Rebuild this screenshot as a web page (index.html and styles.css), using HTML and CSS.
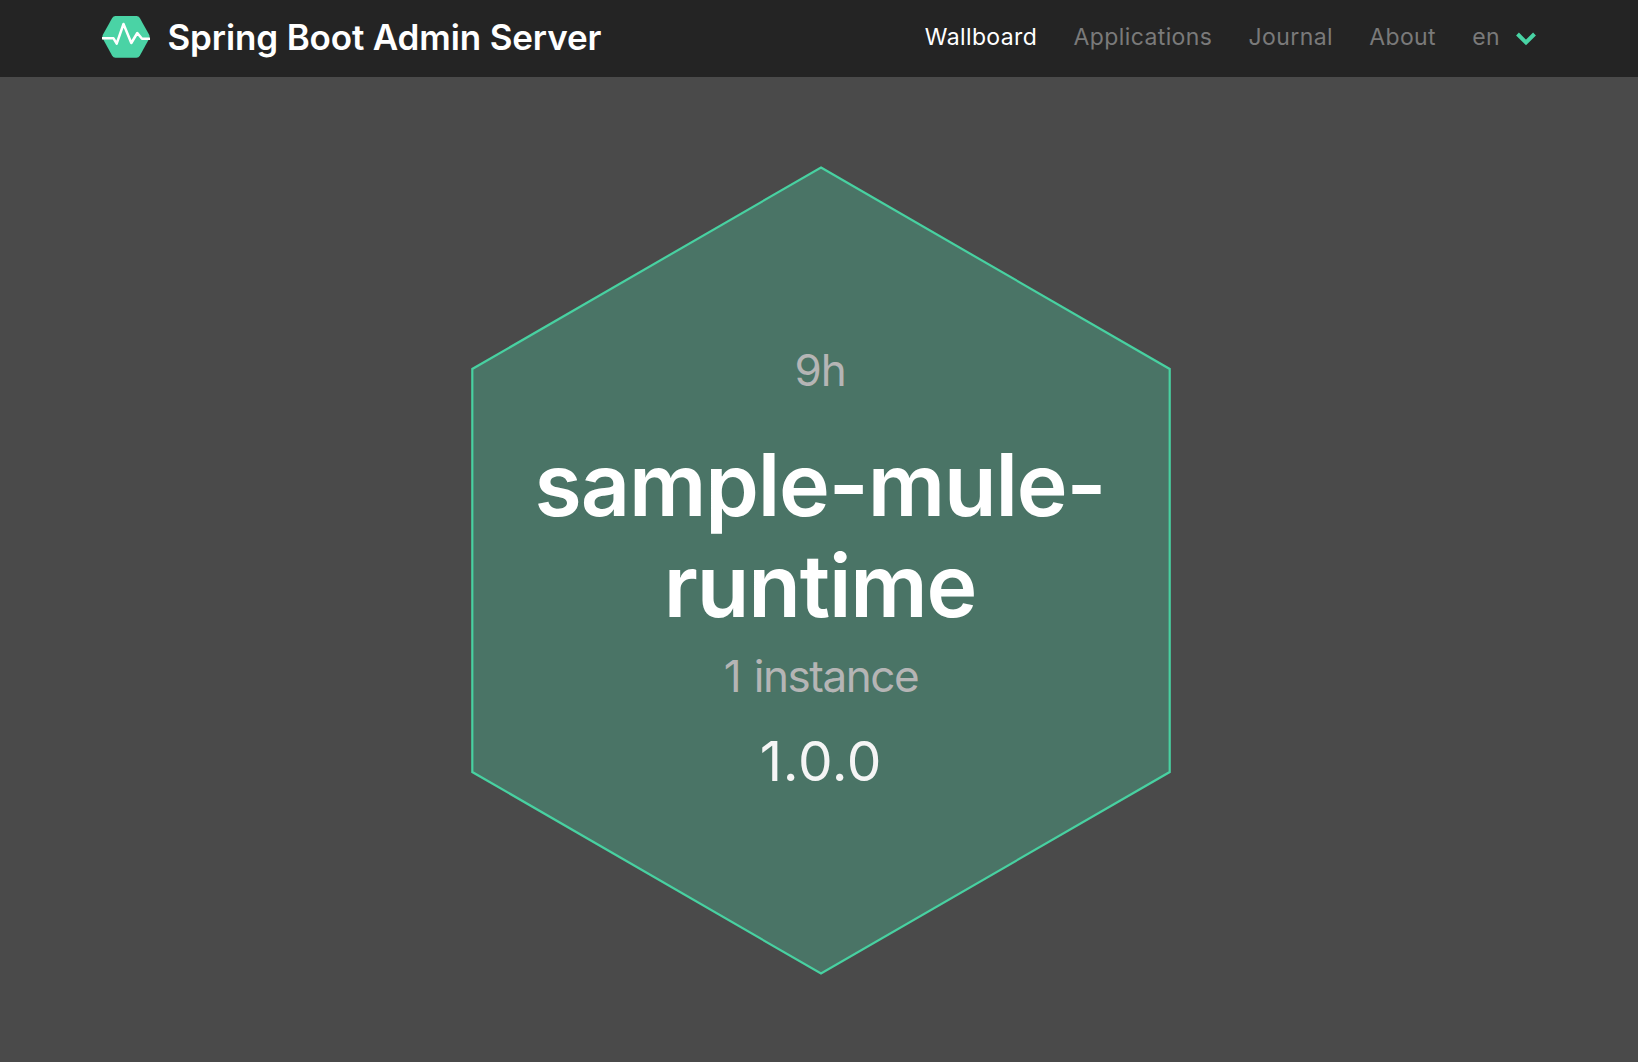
FILE: index.html
```
<!DOCTYPE html>
<html lang="en">
<head>
<meta charset="utf-8">
<title>Spring Boot Admin Server</title>
<link rel="stylesheet" href="styles.css">
</head>
<body>
<header class="navbar">
  <a class="brand">
    <svg class="brand-logo" width="48" height="42" viewBox="0 0 48 42">
      <path class="logo-shape" d="M13.5 0h21q2.2 0 3.3 1.9L47 18.6q1.2 2.2 0 4.4l-9.2 16.8q-1.1 2-3.3 2h-21q-2.2 0-3.3-2L1 23q-1.2-2.2 0-4.4L10.200 1.900q1.100-1.900 3.300-1.900z"/>
      <path class="logo-pulse" d="M.5 22.300H11.500L14.700 27.600 21.500 8 29.300 27 35.300 17 40 22.700H47.500"/>
    </svg>
    <span class="brand-title">Spring Boot Admin Server</span>
  </a>
  <nav class="menu">
    <a class="item active">Wallboard</a>
    <a class="item">Applications</a>
    <a class="item">Journal</a>
    <a class="item">About</a>
    <a class="item language">en
      <svg class="chevron" width="20" height="14" viewBox="0 0 20 14"><path d="M1.500 2 10 10.500 18.500 2"/></svg>
    </a>
  </nav>
</header>
<main class="wallboard">
  <article class="application">
    <svg class="hexagon" width="700" height="810" viewBox="0 0 700 810">
      <polygon points="350,2.500 698.700,204 698.700,607 350,808.500 1.300,607 1.300,204"/>
    </svg>
    <div class="details">
      <div class="uptime">9h</div>
      <h1 class="name">sample-mule-<br>runtime</h1>
      <div class="instances">1 instance</div>
      <div class="version">1.0.0</div>
    </div>
  </article>
</main>
</body>
</html>
```
FILE: styles.css
```
* { box-sizing: border-box; }

body {
  margin: 0;
  min-height: 1062px;
  background: #4a4a4a;
  font-family: Inter, "Liberation Sans", sans-serif;
  overflow: hidden;
}

.navbar {
  display: flex;
  justify-content: space-between;
  height: 77px;
  padding: 0 102px 0 101.5px;
  background: #242424;
}

.brand {
  display: flex;
  align-items: flex-start;
  padding-top: 16px;
}

.brand-logo { flex: none; }
.logo-shape { fill: #4ad3a5; }

.logo-pulse {
  fill: none;
  stroke: #fff;
  stroke-width: 2.5;
  stroke-linecap: round;
  stroke-linejoin: round;
}

.brand-title {
  margin-left: 18px;
  color: #fff;
  font-size: 35px;
  font-weight: 600;
  line-height: 42px;
  letter-spacing: -0.14px;
  white-space: nowrap;
}

.menu {
  display: flex;
  gap: 36.2px;
  padding-top: 22px;
}

.item {
  display: flex;
  color: #7a7a7a;
  font-size: 23px;
  line-height: 30px;
  letter-spacing: 0.4px;
}

.item.active { color: #fff; }
.chevron { margin: 10px 0 0 16px; }

.chevron path {
  fill: none;
  stroke: #48d3a4;
  stroke-width: 4;
}

.wallboard {
  display: flex;
  justify-content: center;
  padding: 88px 0 0 4px;
}

.application { display: grid; }
.hexagon, .details { grid-area: 1 / 1; }

.hexagon polygon {
  fill: #4a7466;
  stroke: #48d1a1;
  stroke-width: 2.2;
}

.details {
  padding-top: 179px;
  text-align: center;
}

.uptime, .instances {
  color: #b5b5b5;
  font-size: 44px;
  line-height: 52px;
  letter-spacing: -1.2px;
}

.uptime { padding-right: 2px; }

.name {
  margin: 39px 0 0;
  padding-right: 2px;
  color: #fff;
  font-size: 86px;
  font-weight: 600;
  line-height: 101px;
  letter-spacing: -1.15px;
}

.instances {
  margin-top: 13px;
  letter-spacing: -1.45px;
  word-spacing: 2.5px;
}

.version {
  margin-top: 26px;
  color: #f5f5f5;
  font-size: 55px;
  line-height: 66px;
  letter-spacing: 0.6px;
}
```
